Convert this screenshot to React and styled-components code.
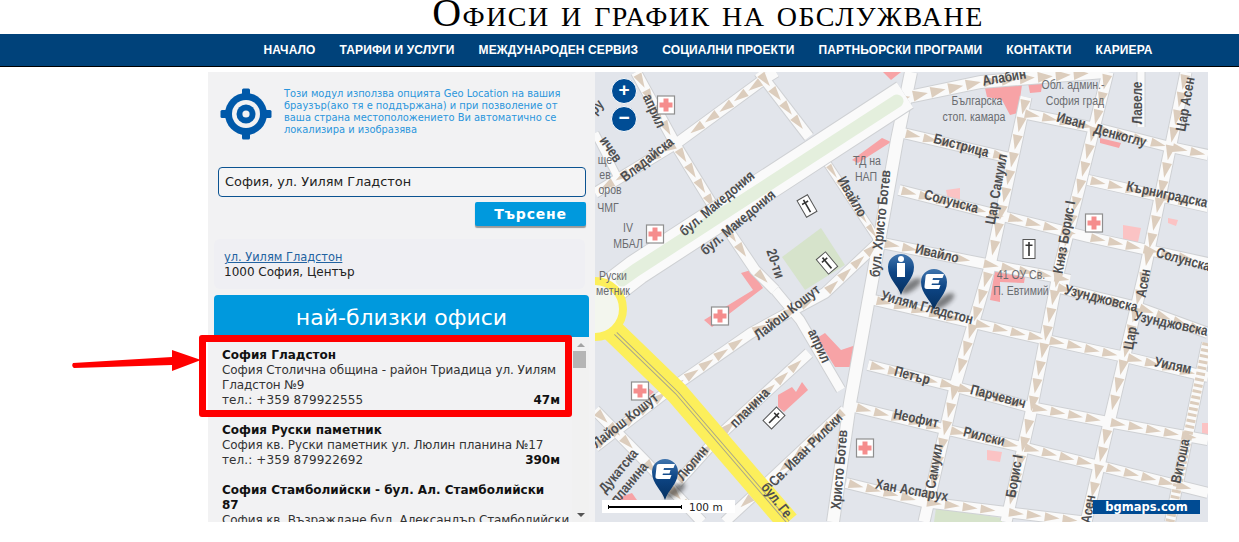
import React from "react";
import styled, { createGlobalStyle } from "styled-components";

const GlobalStyle = createGlobalStyle`
  html, body { margin: 0; padding: 0; background: #fff; }
  body { font-family: "DejaVu Sans", Verdana, sans-serif; overflow: hidden; }
`;

const Page = styled.div`
  width: 1239px;
  height: 542px;
  overflow: hidden;
`;

const TitleRow = styled.div`
  width: 1000px;
  height: 34px;
  margin-left: 208px;
  text-align: center;
`;

const Title = styled.h1`
  margin: 0;
  font: 400 40px/25px "Liberation Serif", "Times New Roman", serif;
  font-variant: small-caps;
  letter-spacing: 1.45px;
  white-space: nowrap;
  color: #000;
`;

const Nav = styled.nav`
  height: 32px;
  background: #00427a;
  border-bottom: 1px solid #000;
  padding-left: 208px;
`;

const NavInner = styled.div`
  width: 1000px;
  height: 32px;
  display: flex;
  justify-content: center;
  align-items: center;
  gap: 24px;
`;

const NavLink = styled.a`
  font: 700 12px "Liberation Sans", Arial, sans-serif;
  letter-spacing: 0.12px;
  color: #fff;
`;

const Content = styled.div`
  display: flex;
  width: 1000px;
  height: 450px;
  margin: 5px 0 0 208px;
`;

const Sidebar = styled.aside`
  position: relative;
  width: 387px;
  flex: none;
  background: #f2f2f3;
  display: flex;
  flex-direction: column;
`;

const GeoRow = styled.div`
  display: flex;
  height: 95px;
  padding: 16px 0 0 12px;
  box-sizing: border-box;
  gap: 12px;
`;

const GeoText = styled.p`
  margin: 0;
  width: 285px;
  font-size: 9.9px;
  line-height: 12px;
  color: #2b96dc;
`;

const SearchBlock = styled.div`
  display: flex;
  flex-direction: column;
  align-items: flex-end;
  width: 368px;
  margin-left: 10px;
`;

const SearchInput = styled.div`
  width: 100%;
  height: 30px;
  box-sizing: border-box;
  border: 1px solid #0b5391;
  border-radius: 4px;
  padding-left: 6px;
  font-size: 12.9px;
  line-height: 28px;
  color: #222;
  background: #f4f4f5;
`;

const SearchButton = styled.button`
  width: 111px;
  height: 24px;
  margin-top: 5px;
  border: none;
  border-radius: 2px;
  background: #0099dd;
  box-shadow: 0 2px 1px #9a9a9a;
  font: 700 14px "DejaVu Sans", Verdana, sans-serif;
  letter-spacing: 0.8px;
  color: #fff;
`;

const Address = styled.div`
  width: 371px;
  height: 50px;
  margin: 13px 0 0 6px;
  box-sizing: border-box;
  padding: 11px 10px 0;
  border-radius: 6px;
  background: #efeff3;
  font-size: 12px;
  line-height: 15px;
  color: #222;
`;

const AddressLink = styled.a`
  display: block;
  font-size: 11.4px;
  color: #2262a0;
  text-decoration: underline;
`;

const ListHeader = styled.div`
  width: 375px;
  height: 42px;
  margin: 6px 0 0 6px;
  flex: none;
  border-radius: 4px 4px 0 0;
  background: #0099dd;
  font-size: 22px;
  line-height: 46px;
  text-align: center;
  color: #fff;
`;

const ListWrap = styled.div`
  flex: 1;
  min-height: 0;
  display: flex;
  margin-left: 6px;
  width: 375px;
`;

const List = styled.div`
  flex: 1;
  min-width: 0;
  overflow: hidden;
  padding: 11px 0 0 8px;
  font-size: 12px;
  line-height: 15px;
  color: #333;
`;

const Office = styled.div`
  margin-bottom: 15px;
`;

const OfficeName = styled.div`
  padding-right: 18px;
  font-weight: 700;
  color: #111;
`;

const OfficeAddress = styled.div`
  letter-spacing: -0.1px;
`;

const OfficeFoot = styled.div`
  display: flex;
  justify-content: space-between;
  margin-right: 12px;
`;

const Phone = styled.span`
  letter-spacing: 0.1px;
`;

const Distance = styled.b`
  color: #111;
`;

const Scrollbar = styled.div`
  width: 17px;
  flex: none;
  display: flex;
  flex-direction: column;
  align-items: center;
  justify-content: space-between;
  background: #f1f1f1;
  padding: 6px 0 5px;
  box-sizing: border-box;
`;

const ScrollTrack = styled.div`
  flex: 1;
  width: 100%;
  padding-top: 4px;
`;

const ScrollThumb = styled.div`
  width: 13px;
  height: 17px;
  margin-left: 1px;
  background: #b5b5b5;
`;

const ScrollArrow = styled.div`
  width: 0;
  height: 0;
  border-left: 4px solid transparent;
  border-right: 4px solid transparent;
  ${(p) => (p.$down ? "border-top: 4px solid #555;" : "border-bottom: 4px solid #a3a3a3;")}
`;

const RedBox = styled.div`
  position: absolute;
  left: -9px;
  top: 263px;
  width: 373px;
  height: 82px;
  box-sizing: border-box;
  border: 7px solid #ff0000;
  border-radius: 3px;
`;

const RedArrow = styled.svg`
  position: absolute;
  left: -137px;
  top: 276px;
`;

const MapPane = styled.div`
  position: relative;
  flex: 1;
  overflow: hidden;
  background: #e2e5eb;
`;

const MapSvg = styled.svg`
  display: block;
`;

const ZoomStack = styled.div`
  position: absolute;
  left: 16px;
  top: 6px;
  display: flex;
  flex-direction: column;
  gap: 2px;
`;

const ZoomButton = styled.div`
  width: 26px;
  height: 26px;
  box-sizing: border-box;
  border: 1px solid #fff;
  border-radius: 50%;
  background: #004d95;
  color: #fff;
  font: 700 19px/22px "Liberation Sans", Arial, sans-serif;
  text-align: center;
`;

const ScaleBox = styled.div`
  position: absolute;
  left: 7px;
  bottom: 9px;
  width: 133px;
  height: 13px;
  display: flex;
  align-items: center;
  gap: 7px;
  padding-left: 6px;
  box-sizing: border-box;
  background: #fff;
  font-size: 10.5px;
  color: #222;
`;

const ScaleLine = styled.div`
  width: 74px;
  height: 4px;
  box-sizing: border-box;
  border-left: 1px solid #000;
  border-right: 1px solid #000;
  background: linear-gradient(#000, #000) center / 100% 2px no-repeat;
`;

const Brand = styled.div`
  position: absolute;
  right: 8px;
  bottom: 8px;
  width: 107px;
  height: 14px;
  background: #004b93;
  color: #fff;
  font-size: 11.5px;
  font-weight: 700;
  line-height: 14px;
  text-align: center;
`;

const Label = styled.text`
  font-family: "Liberation Sans", Arial, sans-serif;
  font-size: ${(p) => p.$size || 14.4}px;
  font-weight: ${(p) => (p.$thin ? 400 : 700)};
  fill: ${(p) => (p.$thin ? "#6a6c70" : "#4d4e50")};
  text-anchor: middle;
`;

const navItems = ["НАЧАЛО", "ТАРИФИ И УСЛУГИ", "МЕЖДУНАРОДЕН СЕРВИЗ", "СОЦИАЛНИ ПРОЕКТИ", "ПАРТНЬОРСКИ ПРОГРАМИ", "КОНТАКТИ", "КАРИЕРА"];

const offices = [
  { name: "София Гладстон", addr: "София Столична община - район Триадица ул. Уилям Гладстон №9", tel: "тел.: +359 879922555", dist: "47м" },
  { name: "София Руски паметник", addr: "София кв. Руски паметник ул. Люлин планина №17", tel: "тел.: +359 879922692", dist: "390м" },
  { name: "София Стамболийски - бул. Ал. Стамболийски 87", addr: "София кв. Възраждане бул. Александър Стамболийски", tel: "", dist: "" },
];

// [points, width, arrows?]
const roads = [
  [[[776, 72], [763, 80], [677, 143], [595, 193]], 10, true],
  [[[636, 72], [677, 147], [726, 227], [755, 270], [775, 290]], 10, true],
  [[[775, 290], [800, 320], [841, 390]], 9, false],
  [[[759, 72], [809, 137]], 10, true],
  [[[827, 163], [878, 240]], 7, true],
  [[[595, 447], [669, 390], [751, 333], [825, 293], [878, 243]], 10, true],
  [[[677, 483], [722, 433], [809, 353]], 10, true],
  [[[845, 410], [767, 483], [730, 517], [725, 522]], 10, true],
  [[[595, 410], [644, 460], [702, 522]], 10, true],
  [[[595, 133], [618, 178]], 7, false],
  [[[1026, 97], [989, 270], [956, 383], [924, 522]], 11, true],
  [[[1108, 72], [1059, 270], [1030, 417], [1006, 522]], 11, true],
  [[[1186, 72], [1145, 270], [1108, 427], [1086, 522]], 11, true],
  [[[1141, 72], [1141, 127]], 7, false],
  [[[903, 133], [1010, 158]], 10, true],
  [[[1022, 113], [1096, 128], [1170, 147], [1208, 155]], 10, true],
  [[[899, 190], [1006, 217], [1088, 237], [1208, 263]], 10, true],
  [[[1088, 180], [1208, 207]], 10, true],
  [[[882, 243], [981, 263], [1070, 280]], 10, true],
  [[[874, 300], [973, 323], [1047, 340], [1125, 357], [1208, 377]], 10, true],
  [[[1055, 287], [1137, 307], [1208, 333]], 10, true],
  [[[868, 365], [956, 387], [1030, 407], [1108, 422], [1208, 440]], 10, true],
  [[[854, 407], [948, 430], [1022, 447], [1104, 467], [1208, 493]], 10, true],
  [[[846, 483], [924, 502], [1006, 512], [1088, 522]], 10, true],
  [[[1207, 343], [1170, 522]], 10, false],
  [[[911, 72], [897, 140], [874, 270], [850, 403], [833, 522]], 12, false],
  [[[875, 104], [981, 82], [1104, 72]], 12, true],
];

const pinkBlocks = [
  "883,72 901,72 891,80",
  "985,88 1022,85 1018,113 1010,115 1002,100 987,97",
  "1028,83 1043,80 1041,92 1030,93",
  "852,160 882,138 891,142 858,163",
  "1100,138 1121,143 1119,148 1100,143",
  "995,270 1026,270 1024,283 1000,282 1000,302 990,300",
  "741,273 751,270 763,288 712,327 704,320 753,290",
  "817,338 825,333 841,350 856,345 852,367 835,367",
  "778,395 792,387 796,392 802,382 808,390 784,412 778,407",
  "648,388 654,392 648,397",
  "620,497 632,493 644,510 620,510",
];

const paleBlocks = [
  "946,190 960,188 960,200 948,200",
  "1123,225 1141,228 1137,247 1123,243",
  "1168,218 1178,220 1176,226 1168,223",
  "987,450 1002,452 1000,462 987,460",
  "1202,423 1208,423 1208,437 1202,435",
];

const labels = [
  ["Алабин", 1005, 82, -10],
  ["Иван", 1070, 125, 15],
  ["Денкоглу", 1119, 140, 15],
  ["Лавеле", 1142, 103, -90],
  ["Цар Асен", 1190, 105, -80],
  ["Бистрица", 960, 150, 15],
  ["Ивайло", 848, 199, 60],
  ["бул. Христо Ботев", 885, 224, -84],
  ["Цар Самуил", 1001, 190, -80],
  ["Солунска", 950, 206, 15],
  ["Княз Борис I", 1069, 238, -80],
  ["Кърниградска", 1166, 199, 12],
  ["Солунска", 1182, 264, 15],
  ["Ивайло", 936, 258, 13],
  ["бул. Македония", 720, 207, -40],
  ["бул. Македония", 741, 226, -40],
  ["Владайска", 650, 163, -38],
  ["април", 650, 113, 65],
  ["ичев", 607, 152, 55],
  ["ру", 600, 110, -50],
  ["Уилям Гладстон", 926, 312, 15],
  ["Узунджовска", 1100, 303, 14],
  ["Узунджовска", 1170, 328, 12],
  ["Цар", 1135, 339, -80],
  ["Асен", 1148, 284, -80],
  ["Уилям", 1172, 370, 12],
  ["Петър", 911, 380, 15],
  ["Парчевич", 997, 401, 15],
  ["Неофит", 915, 423, 12],
  ["Рилски", 983, 441, 14],
  ["Лайош Кошут", 790, 316, -38],
  ["Лайош Кошут", 628, 424, -38],
  ["април", 815, 348, 65],
  ["20-ти", 771, 265, 72],
  ["планина", 753, 411, -45],
  ["Люлин", 696, 466, -50],
  ["Св. Иван Рилски", 809, 453, -45],
  ["Христо Ботев", 844, 470, -85],
  ["Самуил", 939, 467, -80],
  ["Борис I", 1019, 477, -80],
  ["Хан Аспарух", 911, 495, 10],
  ["Витоша", 1185, 462, -78],
  ["бул. Ге", 773, 503, 52],
  ["Дукатска", 622, 474, -50],
  ["планина", 633, 486, -50],
  ["Асен", 1093, 510, -80],
];

const thinLabels = [
  ["Обл. админ.-", 1073, 89],
  ["София град", 1075, 105],
  ["Българска", 977, 105],
  ["стоп. камара", 974, 121],
  ["ТД на", 867, 165],
  ["НАП", 866, 181],
  ["41 ОУ Св.", 1021, 279],
  ["П. Евтимий", 1021, 295],
  ["IV", 628, 232],
  ["МБАЛ", 628, 248],
  ["Руски", 613, 280],
  ["метник", 613, 295],
  ["ще", 605, 164],
  ["ев", 605, 179],
  ["оров", 610, 194],
  ["ЧМГ", 608, 212],
];

const hospitals = [[666, 105], [655, 234], [1094, 223], [720, 316], [640, 391], [865, 448]];
const churches = [[807, 206, -30], [1029, 249, 0], [827, 263, -40], [774, 418, 45]];

// триъгълниците по еднопосочните улици
function arrowsFor(points, width) {
  const out = [];
  for (let i = 0; i < points.length - 1; i++) {
    const [x1, y1] = points[i];
    const [x2, y2] = points[i + 1];
    const len = Math.hypot(x2 - x1, y2 - y1);
    const ux = (x2 - x1) / len;
    const uy = (y2 - y1) / len;
    const half = width / 2 - 0.5;
    for (let d = 3; d + 15 < len; d += 18) {
      const bx = x1 + ux * d;
      const by = y1 + uy * d;
      out.push(`${bx - uy * half},${by + ux * half} ${bx + uy * half},${by - ux * half} ${bx + ux * 15},${by + uy * 15}`);
    }
  }
  return out;
}

const line = (points) => points.map((p) => p.join(",")).join(" ");

function GeoIcon() {
  return (
    <svg width="52" height="52" viewBox="0 0 52 52" style={{ flex: "none" }}>
      <rect x="22" y="0.5" width="8" height="51" rx="1.5" fill="#0059a9" />
      <rect x="0.5" y="22" width="51" height="8" rx="1.5" fill="#0059a9" />
      <circle cx="26" cy="26" r="21" fill="#0059a9" />
      <circle cx="26" cy="26" r="14" fill="#f2f2f3" />
      <circle cx="26" cy="26" r="9.5" fill="#0059a9" />
      <circle cx="26" cy="26" r="3.6" fill="#f2f2f3" />
    </svg>
  );
}

function Pin({ x, y, kind }) {
  return (
    <g transform={`translate(${x} ${y})`}>
      <ellipse cx="10" cy="-9" rx="12" ry="4.5" transform="rotate(-35 10 -9)" fill="#222" opacity="0.55" filter="url(#pinShadow)" />
      <path d="M0 0 C-3 -10 -13 -16 -13 -28 A13 13 0 1 1 13 -28 C13 -16 3 -10 0 0 Z" fill="url(#pinFill)" />
      {kind === "info" ? (
        <g fill="#fff">
          <circle cx="0" cy="-36" r="3" />
          <path d="M-4 -32 H4 V-18 H-4 Z" />
        </g>
      ) : (
        <path d="M-6 -36 H10 L8.5 -32 H-1 L-1.5 -30 H5.5 L4.5 -26.5 H-2 L-2.5 -25 H6.5 L5 -21 H-7 Q-10 -21 -9.5 -24 L-8.5 -33 Q-8.5 -36 -6 -36 Z" fill="#fff" />
      )}
    </g>
  );
}

function StreetMap() {
  return (
    <MapSvg width="613" height="450" viewBox="595 72 613 450">
      <defs>
        <linearGradient id="pinFill" x1="0" y1="0" x2="0" y2="1">
          <stop offset="0" stopColor="#3f74ad" />
          <stop offset="0.45" stopColor="#0d4585" />
          <stop offset="1" stopColor="#06305f" />
        </linearGradient>
        <filter id="pinShadow" x="-50%" y="-50%" width="200%" height="200%">
          <feGaussianBlur stdDeviation="2" />
        </filter>
      </defs>
      <rect x="595" y="72" width="613" height="450" fill="#e2e5eb" />
      <polygon points="782,257 821,228 845,265 805,290" fill="#d6e3cb" />
      <polygon points="936,508 1002,518 1002,522 934,522" fill="#d6e3cb" />
      {pinkBlocks.map((p) => <polygon key={p} points={p} fill="#f7a3a6" />)}
      {paleBlocks.map((p) => <polygon key={p} points={p} fill="#fbc3c4" />)}

      {roads.map(([pts, w], i) => (
        <polyline key={i} points={line(pts)} fill="none" stroke="#cfd1d4" strokeWidth={w + 2} />
      ))}
      {roads.map(([pts, w], i) => (
        <polyline key={i} points={line(pts)} fill="none" stroke="#fafafa" strokeWidth={w} />
      ))}
      {roads.filter((r) => r[2]).map(([pts, w], i) => (
        <g key={i} fill="#dccdbd">
          {arrowsFor(pts, w).map((t) => <polygon key={t} points={t} />)}
        </g>
      ))}
      <polyline points="1207,343 1170,522" fill="none" stroke="#dccdbd" strokeWidth="9" strokeDasharray="3 3" />

      <polyline points="905,95 636,270 610,290" fill="none" stroke="#cfd1d4" strokeWidth="32" />
      <polyline points="905,95 636,270 610,290" fill="none" stroke="#fafafa" strokeWidth="30" />
      <polyline points="897,101 636,270 622,280" fill="none" stroke="#e4efdd" strokeWidth="13" strokeLinecap="round" />

      <polyline points="610,328 677,393 788,522" fill="none" stroke="#fcef5b" strokeWidth="23" />
      <polyline points="610,328 677,393 788,522" fill="none" stroke="#a9a68a" strokeWidth="4" />
      <polyline points="610,328 677,393 788,522" fill="none" stroke="#fcef5b" strokeWidth="2" />
      <circle cx="595" cy="309" r="28" fill="#f3f6ee" stroke="#fcef5b" strokeWidth="8" />

      {labels.map(([t, x, y, a], i) => (
        <Label key={i} transform={`translate(${x} ${y}) rotate(${a}) scale(0.82 1)`}>{t}</Label>
      ))}
      {thinLabels.map(([t, x, y], i) => (
        <Label key={i} $thin $size={13.5} transform={`translate(${x} ${y}) scale(0.78 1)`}>{t}</Label>
      ))}

      {hospitals.map(([x, y]) => (
        <g key={x} transform={`translate(${x} ${y})`}>
          <rect x="-8.5" y="-9" width="17" height="18" fill="#fff" stroke="#8f8f8f" strokeWidth="1.2" />
          <path d="M-2.5 -6.5 H2.5 V-2.5 H6.5 V2.5 H2.5 V6.5 H-2.5 V2.5 H-6.5 V-2.5 H-2.5 Z" fill="#f58d8d" />
        </g>
      ))}
      {churches.map(([x, y, a]) => (
        <g key={x} transform={`translate(${x} ${y}) rotate(${a})`}>
          <rect x="-6" y="-9.5" width="12" height="19" fill="#fff" stroke="#555" strokeWidth="1" />
          <path d="M-0.8 -7 H0.8 V-4.5 H3.5 V-3 H0.8 V7 H-0.8 V-3 H-3.5 V-4.5 H-0.8 Z" fill="#333" />
        </g>
      ))}

      <Pin x={901} y={295} kind="info" />
      <Pin x={934} y={310} kind="office" />
      <Pin x={665} y={500} kind="office" />
    </MapSvg>
  );
}

export default function App() {
  return (
    <Page>
      <GlobalStyle />
      <TitleRow>
        <Title>Офиси и график на обслужване</Title>
      </TitleRow>
      <Nav>
        <NavInner>
          {navItems.map((item) => <NavLink key={item}>{item}</NavLink>)}
        </NavInner>
      </Nav>
      <Content>
        <Sidebar>
          <GeoRow>
            <GeoIcon />
            <GeoText>
              Този модул използва опцията Geo Location на вашия браузър(ако тя е поддържана) и при позволение от ваша страна местоположението Ви автоматично се локализира и изобразява
            </GeoText>
          </GeoRow>
          <SearchBlock>
            <SearchInput>София, ул. Уилям Гладстон</SearchInput>
            <SearchButton>Търсене</SearchButton>
          </SearchBlock>
          <Address>
            <AddressLink>ул. Уилям Гладстон</AddressLink>
            1000 София, Център
          </Address>
          <ListHeader>най-близки офиси</ListHeader>
          <ListWrap>
            <List>
              {offices.map((o) => (
                <Office key={o.name}>
                  <OfficeName>{o.name}</OfficeName>
                  <OfficeAddress>{o.addr}</OfficeAddress>
                  <OfficeFoot>
                    <Phone>{o.tel}</Phone>
                    <Distance>{o.dist}</Distance>
                  </OfficeFoot>
                </Office>
              ))}
            </List>
            <Scrollbar>
              <ScrollArrow />
              <ScrollTrack><ScrollThumb /></ScrollTrack>
              <ScrollArrow $down />
            </Scrollbar>
          </ListWrap>
          <RedBox />
          <RedArrow width="130" height="24" viewBox="0 0 130 24">
            <path d="M2 15 L101 9 V2 L130 12 L101 23 V17 L3 20 Q0 18 2 15 Z" fill="#ff0000" />
          </RedArrow>
        </Sidebar>
        <MapPane>
          <StreetMap />
          <ZoomStack>
            <ZoomButton>+</ZoomButton>
            <ZoomButton>−</ZoomButton>
          </ZoomStack>
          <ScaleBox>
            <ScaleLine />
            100 m
          </ScaleBox>
          <Brand>bgmaps.com</Brand>
        </MapPane>
      </Content>
    </Page>
  );
}
